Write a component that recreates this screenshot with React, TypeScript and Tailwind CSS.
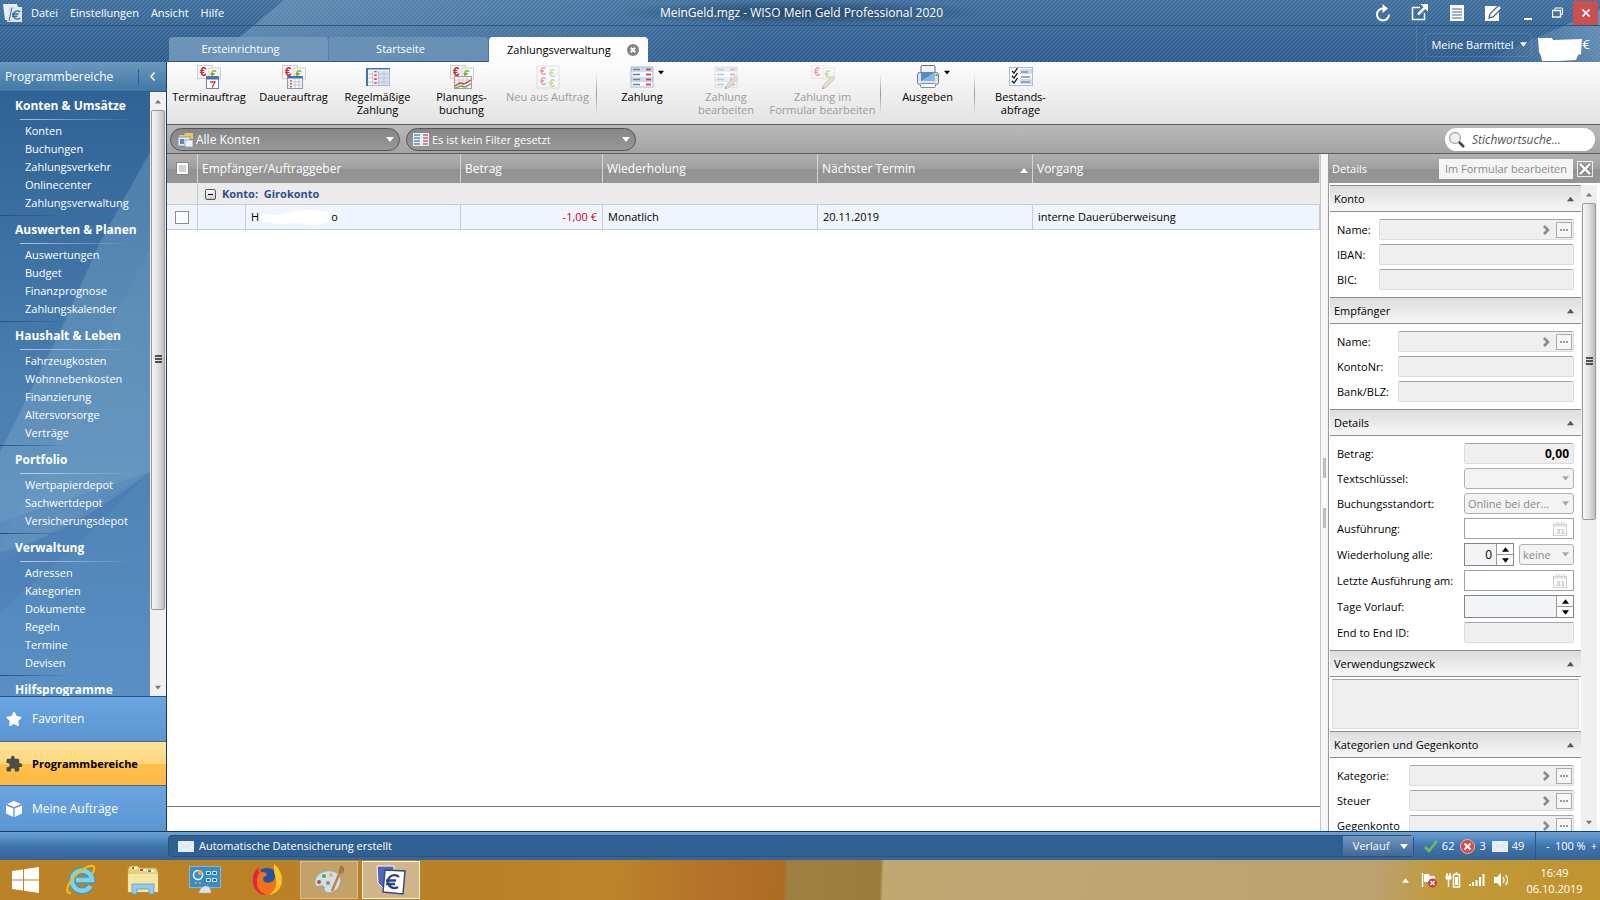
import type { ReactNode } from 'react';
import { FaStar } from 'react-icons/fa';
import { MdExtension } from 'react-icons/md';

const navSections = [
    { title: 'Konten & Umsätze', items: ['Konten', 'Buchungen', 'Zahlungsverkehr', 'Onlinecenter', 'Zahlungsverwaltung'] },
    { title: 'Auswerten & Planen', items: ['Auswertungen', 'Budget', 'Finanzprognose', 'Zahlungskalender'] },
    { title: 'Haushalt & Leben', items: ['Fahrzeugkosten', 'Wohnnebenkosten', 'Finanzierung', 'Altersvorsorge', 'Verträge'] },
    { title: 'Portfolio', items: ['Wertpapierdepot', 'Sachwertdepot', 'Versicherungsdepot'] },
    { title: 'Verwaltung', items: ['Adressen', 'Kategorien', 'Dokumente', 'Regeln', 'Termine', 'Devisen'] },
    { title: 'Hilfsprogramme', items: [] },
];

/* ---------- small icons ---------- */

function Triangle({ up = false, className = '' }: { up?: boolean; className?: string }) {
    return (
        <svg viewBox="0 0 8 5" className={`w-2 h-[5px] shrink-0 ${className}`} fill="currentColor">
            {up ? <path d="M4 0 8 5H0z" /> : <path d="M0 0h8L4 5z" />}
        </svg>
    );
}

function Mail() {
    return (
        <svg viewBox="0 0 16 11" className="w-4 h-[11px] shrink-0">
            <rect width="16" height="11" fill="#e6eef7" />
            <path d="M0 0l8 6 8-6M0 11l6-6M16 11l-6-6" fill="none" stroke="#d6e1ee" strokeWidth="1" />
        </svg>
    );
}

function EuroNotes() {
    return (
        <g fontFamily="Liberation Sans, sans-serif" fontWeight="bold">
            <rect x="0.500" y="0.500" width="15" height="13" fill="#fbf7f7" stroke="#c4c4c4" strokeWidth=".8" />
            <text x="3" y="10.500" fontSize="12" fill="#c9283c">€</text>
            <rect x="12" y="3" width="11.500" height="11" fill="#f7faf4" stroke="#c4c4c4" strokeWidth=".8" />
            <text x="13.500" y="12.500" fontSize="11" fill="#7cae2b">€</text>
        </g>
    );
}

function Pencil() {
    return (
        <g>
            <path d="M21.500 11l2.500 2.500-9 9-4 1.500 1.500-4z" fill="#d6b981" stroke="#73695a" strokeWidth=".8" />
            <path d="M11 24l.7-2.200 1.500 1.500z" fill="#333" />
        </g>
    );
}

function ListRows() {
    return (
        <g>
            {[3, 8, 13, 18].map((y, i) => (
                <g key={y}>
                    <rect x="1" y={y - 1} width="22" height="5" fill={i % 2 ? '#fafcff' : '#c8dbf1'} />
                    <path d={`M3 ${y + 1.5}h7`} stroke="#75818f" strokeWidth="1.500" />
                    <path d={`M16 ${y + 1.5}h5`} stroke="#d2404f" strokeWidth="1.800" />
                </g>
            ))}
            <rect x="1" y="2" width="22" height="20" fill="none" stroke="#9ab0c8" strokeWidth=".8" />
        </g>
    );
}

const toolIcons: Record<string, ReactNode> = {
    termin: (
        <>
            <EuroNotes />
            <rect x="9.500" y="11.500" width="12" height="12" fill="#fff" stroke="#6d87a6" />
            <rect x="9.500" y="11.500" width="12" height="3" fill="#3c74b8" />
            <path d="M13 17h5l-3 5.500" fill="none" stroke="#d33" strokeWidth="1.300" />
        </>
    ),
    dauer: (
        <>
            <EuroNotes />
            <rect x="5.500" y="11.500" width="15" height="12" fill="#f8f8f8" stroke="#8a9bb0" />
            <rect x="5.500" y="11" width="15" height="2.500" fill="#3c74b8" />
            <path d="M6 17h14M6 20h14M13 14v9M17 14v9" stroke="#b7bec7" strokeWidth=".8" />
            <path d="M9 15v8" stroke="#d33" strokeWidth="1.500" strokeDasharray="1.500 1.500" />
        </>
    ),
    regel: (
        <>
            <rect x="0.500" y="3.500" width="23" height="17" fill="#f6f6f6" stroke="#b5bcc6" />
            <rect x="0" y="3" width="24" height="1.500" fill="#3c74b8" />
            <rect x="0" y="3" width="2" height="18" fill="#3c74b8" />
            <rect x="12" y="6" width="11" height="14" fill="#d7e2ee" />
            <path d="M2 9h21M2 13h21M2 17h21M6.500 6v14M12.500 6v14M18 6v14" stroke="#b3bfce" strokeWidth=".8" />
            <path d="M9.500 6v14" stroke="#d33" strokeWidth="2.500" strokeDasharray="1.300 2.500" />
        </>
    ),
    planung: (
        <>
            <EuroNotes />
            <rect x="4.500" y="11.500" width="17" height="12" fill="#f3f3f3" stroke="#a0a0a0" />
            <path d="M5 15h16M5 18h16M9 12v11M13 12v11M17 12v11" stroke="#c6c6c6" strokeWidth=".8" />
            <path d="M5 21l5-3 4 1 7-4" fill="none" stroke="#cf3b46" strokeWidth="1.300" />
            <path d="M5 23l6-2 4 1 6-3" fill="none" stroke="#6ea43a" strokeWidth="1.300" />
        </>
    ),
    neu: (
        <g fontFamily="Liberation Sans, sans-serif" fontWeight="bold" fontSize="11">
            <rect x="1" y="1" width="22" height="22" fill="#fbf8f8" stroke="#aaa" strokeWidth=".8" />
            <text x="4" y="10" fill="#c9283c">€</text>
            <text x="13" y="12" fill="#7cae2b">€</text>
            <text x="4" y="20" fill="#c9283c">€</text>
            <text x="13" y="22" fill="#7cae2b">€</text>
        </g>
    ),
    liste: <ListRows />,
    listeEdit: (
        <>
            <ListRows />
            <Pencil />
        </>
    ),
    formEdit: (
        <>
            <EuroNotes />
            <Pencil />
        </>
    ),
    drucker: (
        <>
            <rect x="5" y="0.500" width="14" height="10" rx="1" fill="#f3f3f3" stroke="#6d6d6d" />
            <rect x="1.500" y="7.500" width="21" height="12" rx="2" fill="#dfe2e5" stroke="#747b83" />
            <rect x="5" y="7" width="14" height="9" fill="#4d8cc9" />
            <path d="M5 16l14-9v9z" fill="#86b7e2" />
            <circle cx="20.500" cy="10" r="1" fill="#4aa32a" />
            <rect x="4.500" y="18.500" width="15" height="4" rx="1" fill="#fafafa" stroke="#8a8a8a" />
        </>
    ),
    bestand: (
        <>
            <rect x="0.500" y="2.500" width="23" height="18" fill="#f6fafe" stroke="#a9bdd3" />
            <rect x="11" y="4" width="12" height="5" fill="#c8dbf1" />
            <rect x="11" y="14" width="12" height="5" fill="#c8dbf1" />
            <path d="M12 7h7M12 12h9M12 17h9" stroke="#8593a3" strokeWidth="1.500" />
            <path d="M3 6l2 2 3.500-5M3 11l2 2 3.500-5M3 16l2 2 3.500-5" fill="none" stroke="#111" strokeWidth="1.300" />
        </>
    ),
};

/* ---------- header ---------- */

function AppLogo() {
    return (
        <svg viewBox="0 0 20 20" className="w-5 h-5 shrink-0">
            <path d="M0 1h14l1 3H7L5 17H2z" fill="#e6eef6" />
            <path d="M7 4h12v15H4z" fill="#dce7f2" />
            <path d="M9 4.500L6 18" stroke="#3a6899" strokeWidth="1" />
            <path d="M17 9a4 4 0 1 0 0 6M9 11h6.500M9 13.200h5.500" fill="none" stroke="#3a6899" strokeWidth="1.500" />
        </svg>
    );
}

function Header() {
    return (
        <header className="relative shrink-0 bg-gradient-to-b from-[#42719f] to-[#2d5b8c] text-white">
            <svg className="absolute inset-0 w-full h-full" viewBox="0 0 1600 62" preserveAspectRatio="none">
                <defs>
                    <pattern id="hatch" width="4" height="4" patternUnits="userSpaceOnUse">
                        <path d="M-1 1l2-2M0 4l4-4M3 5l2-2" stroke="#8fb0cf" strokeOpacity=".3" strokeWidth="1" />
                    </pattern>
                    <linearGradient id="shine">
                        <stop offset="0" stopColor="#8fb4d2" stopOpacity=".45" />
                        <stop offset="1" stopColor="#8fb4d2" stopOpacity="0" />
                    </linearGradient>
                    <linearGradient id="corner">
                        <stop offset="0" stopColor="#8fb4d2" stopOpacity="0" />
                        <stop offset="1" stopColor="#8fb4d2" stopOpacity=".5" />
                    </linearGradient>
                </defs>
                <rect width="1600" height="62" fill="url(#hatch)" />
                <path d="M284 0H760V62H210z" fill="url(#shine)" />
                <path d="M1480 62L1600 10V62z" fill="url(#corner)" />
            </svg>
            <div className="relative flex items-center h-[26px] border-b border-[#2c5580]">
                <div className="flex-1 basis-0 flex items-center pl-[3px]">
                    <AppLogo />
                    <nav className="flex gap-3 pl-2 pt-px">
                        <button>Datei</button>
                        <button>Einstellungen</button>
                        <button>Ansicht</button>
                        <button>Hilfe</button>
                    </nav>
                </div>
                <h1 className="px-12 pt-px leading-6 text-xs bg-[radial-gradient(closest-side,rgba(20,40,65,0.6),transparent)]">
                    MeinGeld.mgz - WISO Mein Geld Professional 2020
                </h1>
                <div className="flex-1 basis-0 flex items-center justify-end">
                    <button aria-label="Aktualisieren" className="w-[37px] flex justify-center">
                        <svg viewBox="0 0 16 18" className="w-4 h-[18px]" fill="none" stroke="#fff" strokeWidth="2">
                            <path d="M9.500 4.500H8a6 6 0 1 0 6 6" />
                            <path d="M7.500 0v9L13 4.500z" fill="#fff" stroke="none" />
                        </svg>
                    </button>
                    <button aria-label="Extern öffnen" className="w-[37px] flex justify-center">
                        <svg viewBox="0 0 17 17" className="w-[17px] h-[17px]" fill="none" stroke="#fff">
                            <path d="M9 3.500H1.500v12h12V9" strokeWidth="1.500" />
                            <path d="M7 10.500l7-7" strokeWidth="2.500" />
                            <path d="M9.500 0H17v7.500z" fill="#fff" stroke="none" />
                        </svg>
                    </button>
                    <button aria-label="Liste" className="w-[37px] flex justify-center">
                        <svg viewBox="0 0 14 16" className="w-3.5 h-4">
                            <rect width="14" height="16" fill="#fff" />
                            <path d="M2 4h10M2 7h10M2 10h10M2 13h10" stroke="#3a6899" strokeWidth="1" />
                        </svg>
                    </button>
                    <button aria-label="Bearbeiten" className="w-[37px] flex justify-center">
                        <svg viewBox="0 0 17 16" className="w-[17px] h-4">
                            <path d="M0 1h14v15H0z" fill="#fff" />
                            <path d="M14 0l3 3-9 9-4 1 1-4z" fill="#fff" stroke="#3a6899" strokeWidth="1.300" />
                        </svg>
                    </button>
                    <button aria-label="Minimieren" className="w-8 h-5 flex items-end justify-center pb-[3px]">
                        <span className="w-2 h-[2px] bg-white" />
                    </button>
                    <button aria-label="Wiederherstellen" className="w-[27px] flex justify-center">
                        <svg viewBox="0 0 11 11" className="w-[11px] h-[11px]" fill="none" stroke="#fff">
                            <path d="M3 3V1h7.500v6.500H8.500" />
                            <rect x="0.500" y="3.500" width="8" height="6.500" strokeWidth="1.400" />
                        </svg>
                    </button>
                    <button aria-label="Schließen" className="w-[25px] h-6 mx-[2px] bg-[#c8504f] flex items-center justify-center">
                        <svg viewBox="0 0 8 8" className="w-2 h-2" stroke="#fff" strokeWidth="1.600">
                            <path d="M.5.5l7 7M7.500.5l-7 7" />
                        </svg>
                    </button>
                </div>
            </div>
            <div className="relative flex items-end h-9 pl-[169px]">
                <button className="w-[159px] h-[25px] mr-px rounded-t bg-[#7399bb]/90 border-b border-[#2c5580]">
                    <span className="pr-4">Ersteinrichtung</span>
                </button>
                <button className="w-[159px] h-[25px] mr-px rounded-t bg-[#6c93b7]/90 border-b border-[#2c5580]">
                    <span className="pr-4">Startseite</span>
                </button>
                <div className="w-[159px] h-[25px] rounded-t bg-[#fdfdfd] text-black flex items-center justify-between pl-[18px] pr-[9px]">
                    <button>Zahlungsverwaltung</button>
                    <button aria-label="Tab schließen">
                        <svg viewBox="0 0 12 12" className="w-3 h-3">
                            <circle cx="6" cy="6" r="6" fill="#848484" />
                            <path d="M3.800 3.800l4.400 4.400M8.200 3.800l-4.400 4.400" stroke="#fff" strokeWidth="2" />
                        </svg>
                    </button>
                </div>
                <div className="ml-auto h-full flex items-center border-l border-white/10 pl-2 pr-[10px]">
                    <button className="flex items-center gap-[6px] border border-white/10 rounded pl-[5px] pr-1 h-6 mt-px">
                        Meine Barmittel <Triangle className="w-[7px]" />
                    </button>
                    <svg viewBox="0 0 45 24" className="w-[45px] h-6 ml-[6px] mt-[11px]">
                        <path d="M0 0h14l1 2 29-1-1 15-3 1-2 5-18 1H4l-1-5-2-4z" fill="#fff" />
                    </svg>
                    <span className="text-[13px]">€</span>
                </div>
            </div>
        </header>
    );
}

/* ---------- left navigation ---------- */

function ScrollBar({ size }: { size: string }) {
    return (
        <div className="w-4 shrink-0 bg-[#f0f0f0] flex flex-col items-center">
            <div className="h-[18px] flex items-center">
                <Triangle up className="w-[6px] h-1 text-[#777]" />
            </div>
            <div className="flex-1 w-full px-px">
                <div className={`${size} border border-[#999] rounded-xs bg-gradient-to-r from-[#f6f6f6] via-[#e2e2e2] to-[#bdbdbd] flex items-center justify-center`}>
                    <svg viewBox="0 0 7 9" className="w-[7px] h-[9px]">
                        <path d="M0 1h7M0 4h7M0 7h7" stroke="#222" strokeWidth="1.400" />
                    </svg>
                </div>
            </div>
            <div className="h-[18px] flex items-center">
                <Triangle className="w-[6px] h-1 text-[#777]" />
            </div>
        </div>
    );
}

function Sidebar() {
    return (
        <aside className="w-[167px] shrink-0 flex flex-col border-r border-[#173b60] text-white">
            <div className="h-[30px] shrink-0 flex items-center bg-gradient-to-b from-[#6b97bd] to-[#4179a8] border-b border-[#2d5b88] pl-[5px]">
                <span className="flex-1 text-xs">Programmbereiche</span>
                <button aria-label="Einklappen" className="w-7 h-4 border-l border-[#2f5f8e] flex items-center justify-center">
                    <svg viewBox="0 0 5 9" className="w-[5px] h-[9px]" fill="none" stroke="#fff" strokeWidth="1.500">
                        <path d="M4.500.5L1 4.500l3.500 4" />
                    </svg>
                </button>
            </div>
            <div className="flex-1 min-h-0 flex bg-gradient-to-b from-[#2f6396] via-[#4a7fb0] to-[#5a8fc4]">
                <div className="relative flex-1 overflow-hidden">
                    <svg className="absolute inset-0 w-full h-full" viewBox="0 0 150 604" preserveAspectRatio="none">
                        <path d="M150 60L100 150 60 240 0 360V460C50 450 110 410 150 380z" fill="#9cc3dc" opacity=".25" />
                        <path d="M150 155L60 335 0 455V470L150 380z" fill="#9cc3dc" opacity=".08" />
                        <path d="M150 380L80 450 0 520V430z" fill="#3a70a8" opacity=".2" />
                    </svg>
                    <nav className="relative">
                        {navSections.map((section) => (
                            <section key={section.title} className="pb-px">
                                <h2 className="h-[27px] leading-[28px] pl-[15px] text-xs font-bold">{section.title}</h2>
                                <div className="h-px ml-5 mr-4 mb-[2px] bg-gradient-to-r from-white/60 to-transparent" />
                                {section.items.map((item) => (
                                    <a key={item} href="#" className="block h-[18px] leading-[18px] pl-[25px]">
                                        {item}
                                    </a>
                                ))}
                                <div className="h-px -mb-px mt-[3px] w-[70px] bg-gradient-to-r from-[#25507c] to-transparent" />
                            </section>
                        ))}
                    </nav>
                </div>
                <ScrollBar size="h-[88%]" />
            </div>
            <button className="h-[45px] shrink-0 flex items-center border-t border-[#27547f] bg-gradient-to-b from-[#6aa5e2] to-[#5b95d2] text-xs">
                <FaStar className="w-4 h-4 ml-[6px] mr-[10px]" />
                Favoriten
            </button>
            <button className="h-[45px] shrink-0 flex items-center border-y border-[#4f6a7d] bg-[linear-gradient(#fee29a,#fed77d_50%,#fec04d_51%,#fdb940)] text-black font-bold">
                <MdExtension className="w-[18px] h-[18px] ml-[5px] mr-[9px] text-[#4c4c48]" />
                Programmbereiche
            </button>
            <button className="h-[45px] shrink-0 flex items-center bg-gradient-to-b from-[#6aa5e2] to-[#5b95d2] text-xs">
                <svg viewBox="0 0 16 16" className="w-4 h-4 ml-[6px] mr-[10px]" fill="#fff">
                    <path d="M8 0l7 3-7 3-7-3zM0 4.500l7.300 3V16L0 12.500zM16 4.500l-7.300 3V16L16 12.500z" />
                </svg>
                Meine Aufträge
            </button>
        </aside>
    );
}

/* ---------- toolbar and filters ---------- */

function Tool({ icon, label, width, disabled = false, menu = false }: { icon: string; label: ReactNode; width: string; disabled?: boolean; menu?: boolean }) {
    return (
        <button
            disabled={disabled}
            className={`${width} relative shrink-0 flex flex-col items-center pt-[3px] leading-[13px] ${disabled ? 'text-[#9c9c9c]' : 'text-black'}`}
        >
            <svg viewBox="0 0 24 24" className={`w-6 h-6 mb-px ${disabled ? 'opacity-40' : ''}`}>
                {toolIcons[icon]}
            </svg>
            <span className="whitespace-nowrap">{label}</span>
            {menu && <Triangle className="absolute left-1/2 top-2 ml-4 w-[6px]" />}
        </button>
    );
}

function Divider() {
    return <div className="w-px mx-[5px] h-10 mt-3 shrink-0 bg-gradient-to-b from-transparent via-[#999] to-transparent" />;
}

function Toolbar() {
    return (
        <div className="flex h-[62px] shrink-0 bg-gradient-to-b from-[#fdfdfd] to-[#e3e3e3]">
            <Tool width="w-[84px]" icon="termin" label="Terminauftrag" />
            <Tool width="w-[85px]" icon="dauer" label="Dauerauftrag" />
            <Tool width="w-[83px]" icon="regel" label={<>Regelmäßige<br />Zahlung</>} />
            <Tool width="w-[85px]" icon="planung" label={<>Planungs-<br />buchung</>} />
            <Tool width="w-[87px]" icon="neu" label="Neu aus Auftrag" disabled />
            <Divider />
            <Tool width="w-[80px]" icon="liste" label="Zahlung" menu />
            <Tool width="w-[88px]" icon="listeEdit" label={<>Zahlung<br />bearbeiten</>} disabled />
            <Tool width="w-[105px]" icon="formEdit" label={<>Zahlung im<br />Formular bearbeiten</>} disabled />
            <Divider />
            <Tool width="w-[83px]" icon="drucker" label="Ausgeben" menu />
            <Divider />
            <Tool width="w-[81px]" icon="bestand" label={<>Bestands-<br />abfrage</>} />
        </div>
    );
}

function FilterBar() {
    return (
        <div className="flex h-[30px] shrink-0 items-center gap-[6px] px-[3px] pt-px border-y border-[#5f5f5f] bg-gradient-to-b from-[#b9b9b9] to-[#a3a3a3]">
            <label className="w-[230px] h-[23px] flex items-center rounded-full border border-[#555] bg-gradient-to-b from-[#858585] to-[#989898] pl-[7px] pr-[5px] text-white">
                <svg viewBox="0 0 16 14" className="w-4 h-3.5 shrink-0 mr-[2px]">
                    <path d="M1 2h5l1-2h8v6H1z" fill="#f0c357" />
                    <rect x="0" y="4" width="12" height="9" fill="#dfe9f5" stroke="#6c8fb5" strokeWidth=".7" />
                    <rect x="2" y="6" width="4" height="5" fill="#5b89bd" />
                    <rect x="7" y="7" width="8" height="7" fill="#f2f2f2" stroke="#8592a3" strokeWidth=".7" />
                </svg>
                <select aria-label="Konten" className="flex-1 text-xs appearance-none outline-none bg-transparent">
                    <option>Alle Konten</option>
                </select>
                <Triangle />
            </label>
            <label className="w-[230px] h-[23px] flex items-center rounded-full border border-[#555] bg-gradient-to-b from-[#858585] to-[#989898] pl-[6px] pr-[5px] text-white">
                <svg viewBox="0 0 16 13" className="w-4 h-[13px] shrink-0 mr-[3px]">
                    <rect width="16" height="13" fill="#e7eef7" />
                    <path d="M1 2h6M1 5h6M1 8h6M1 11h6" stroke="#5e8cc0" strokeWidth="1.500" />
                    <path d="M10 2h5M10 5h5M10 8h5M10 11h5" stroke="#d36570" strokeWidth="1.500" />
                </svg>
                <select aria-label="Filter" className="flex-1 appearance-none outline-none bg-transparent">
                    <option>Es ist kein Filter gesetzt</option>
                </select>
                <Triangle />
            </label>
            <label className="ml-auto mr-[2px] w-[150px] h-[23px] flex items-center rounded-full bg-white pl-[3px]">
                <svg viewBox="0 0 17 17" className="w-[17px] h-[17px] shrink-0">
                    <circle cx="7" cy="7" r="5.500" fill="#eef0f2" stroke="#a9a9a9" strokeWidth="1.300" />
                    <path d="M11 11l5 5" stroke="#444" strokeWidth="2.500" />
                </svg>
                <input aria-label="Stichwortsuche" placeholder="Stichwortsuche..." className="w-full pl-[7px] text-xs italic outline-none placeholder:text-[#555]" />
            </label>
        </div>
    );
}

/* ---------- payments table ---------- */

function PaymentsTable() {
    return (
        <main className="flex-1 min-w-0 flex flex-col bg-white">
            <div className="flex-1 min-h-0 border-b border-[#777]">
                <table className="w-full table-fixed border-separate border-spacing-0 text-black">
                    <colgroup>
                        <col className="w-[31px]" />
                        <col className="w-12" />
                        <col className="w-[215px]" />
                        <col className="w-[142px]" />
                        <col className="w-[215px]" />
                        <col className="w-[215px]" />
                        <col />
                    </colgroup>
                    <thead>
                        <tr className="h-[29px] text-left text-xs text-white bg-[linear-gradient(#b0b0b0,#9f9f9f_50%,#929292_51%,#969696)] [&>th]:font-normal [&>th]:border-r [&>th]:border-[#d5d5d5] [&>th]:px-1">
                            <th>
                                <input type="checkbox" aria-label="Alle auswählen" className="appearance-none block mx-auto w-[11px] h-[11px] border-2 border-white bg-[#d2d2d2] outline outline-[#888]" />
                            </th>
                            <th colSpan={2}>Empfänger/Auftraggeber</th>
                            <th>Betrag</th>
                            <th>Wiederholung</th>
                            <th>
                                <span className="flex items-center justify-between">
                                    Nächster Termin <Triangle up className="mt-1" />
                                </span>
                            </th>
                            <th>Vorgang</th>
                        </tr>
                    </thead>
                    <tbody>
                        <tr className="h-[22px] bg-[#ebebeb] [&>td]:border-b [&>td]:border-[#c6cbdc]">
                            <td className="border-r" />
                            <td colSpan={6}>
                                <div className="flex items-center pt-px">
                                    <button aria-label="Gruppe einklappen" className="ml-[7px] mr-[6px] w-[11px] h-[11px] rounded-[2px] border border-[#555] bg-gradient-to-b from-white to-[#ccc] flex items-center justify-center">
                                        <span className="w-[5px] h-px bg-black" />
                                    </button>
                                    <span className="font-bold text-[#2b4f8f] whitespace-pre">Konto:  Girokonto</span>
                                </div>
                            </td>
                        </tr>
                        <tr className="h-[25px] bg-[#f0f5fd] [&>td]:border-b [&>td]:border-r [&>td]:border-[#c6cbdc] [&>td]:px-[5px]">
                            <td>
                                <input type="checkbox" aria-label="Zahlung auswählen" className="appearance-none block mx-auto w-3.5 h-[13px] border border-[#8c8c8c] bg-white" />
                            </td>
                            <td />
                            <td>
                                <span className="flex items-center">
                                    H
                                    <svg viewBox="0 0 70 18" className="w-[70px] h-[18px] mx-px">
                                        <path d="M0 6l20 1 14-4 18-1 17 2v10l-14 3-20-2-16 1-19-3z" fill="#fff" />
                                    </svg>
                                    o
                                </span>
                            </td>
                            <td className="text-right text-[#d0021b]">-1,00 €</td>
                            <td>Monatlich</td>
                            <td>20.11.2019</td>
                            <td>interne Dauerüberweisung</td>
                        </tr>
                    </tbody>
                </table>
            </div>
            <div className="h-6 shrink-0" />
        </main>
    );
}

/* ---------- details panel ---------- */

function Section({ title, children }: { title: string; children: ReactNode }) {
    return (
        <section className="border-t border-[#8d8d8d]">
            <h3>
                <button className="w-full h-[26px] flex items-center justify-between pl-1 pr-[7px] border-b border-[#8d8d8d] bg-gradient-to-b from-[#dcdcdc] to-[#f7f7f7]">
                    {title}
                    <Triangle up className="w-[7px] h-[6px] text-[#555]" />
                </button>
            </h3>
            {children}
        </section>
    );
}

function Rows({ children }: { children: ReactNode }) {
    return <div className="flex flex-col gap-1 py-[7px] px-[7px]">{children}</div>;
}

function Field({ id, label, labelWidth, picker = false, value }: { id: string; label: string; labelWidth: string; picker?: boolean; value?: string }) {
    return (
        <div className="flex h-[21px] items-center">
            <label htmlFor={id} className={`${labelWidth} shrink-0 whitespace-nowrap`}>{label}</label>
            <div className="flex-1 min-w-0 h-full flex items-center bg-[#efefef] border border-[#dcdcdc] border-t-[#a5a5a5] rounded-[2px]">
                <input id={id} defaultValue={value} readOnly className="flex-1 min-w-0 px-1 text-xs text-right font-bold outline-none" />
                {picker && (
                    <>
                        <svg viewBox="0 0 8 10" className="w-2 h-[10px] mr-[5px]" fill="none" stroke="#888" strokeWidth="2.500">
                            <path d="M1 1l4 4-4 4" />
                        </svg>
                        <button aria-label={`${label} auswählen`} className="w-4 h-4 mr-px border border-[#aaa] bg-[#f6f6f6] flex items-center justify-center gap-px">
                            <span className="w-[2px] h-[2px] bg-[#999]" />
                            <span className="w-[2px] h-[2px] bg-[#999]" />
                            <span className="w-[2px] h-[2px] bg-[#999]" />
                        </button>
                    </>
                )}
            </div>
        </div>
    );
}

function Choice({ id, value, className = '' }: { id: string; value: string; className?: string }) {
    return (
        <div className={`flex-1 min-w-0 h-[21px] flex items-center border border-[#b0b0b0] rounded-[3px] bg-[#f3f3f3] text-[#8a8a8a] pl-[3px] pr-1 ${className}`}>
            <select id={id} aria-label={value || undefined} className="flex-1 min-w-0 appearance-none outline-none">
                <option>{value}</option>
            </select>
            <Triangle className="w-[7px] h-1 text-[#aaa]" />
        </div>
    );
}

function DateBox({ id }: { id: string }) {
    return (
        <div className="flex-1 min-w-0 h-[21px] flex items-center border border-[#9da3a8] bg-white pr-[6px]">
            <input id={id} className="flex-1 min-w-0 px-1 outline-none" />
            <svg viewBox="0 0 14 14" className="w-3.5 h-3.5" fill="none" stroke="#cfcfcf">
                <rect x="0.500" y="2.500" width="13" height="11" />
                <path d="M1 4h12M3.500 0v3M6 0v3M8.500 0v3M11 0v3" />
                <text x="3" y="12" fontSize="8" fontWeight="bold" fontFamily="Liberation Sans, sans-serif" fill="#c4c4c4" stroke="none">31</text>
            </svg>
        </div>
    );
}

function Spinner({ id, value, className }: { id: string; value: string; className: string }) {
    return (
        <div className={`h-[23px] flex border border-[#7f8890] bg-[#f2f4f5] ${className}`}>
            <input id={id} defaultValue={value} className="flex-1 min-w-0 px-1 text-xs text-right outline-none" />
            <div className="w-[17px] flex flex-col">
                <button aria-label="Erhöhen" className="flex-1 border-l border-b border-[#999] bg-white flex items-center justify-center">
                    <Triangle up className="w-[7px] h-1" />
                </button>
                <button aria-label="Verringern" className="flex-1 border-l border-[#999] bg-white flex items-center justify-center">
                    <Triangle className="w-[7px] h-1" />
                </button>
            </div>
        </div>
    );
}

function Row({ id, label, children }: { id: string; label: string; children: ReactNode }) {
    return (
        <div className="flex items-center">
            <label htmlFor={id} className="w-[127px] shrink-0 whitespace-nowrap">{label}</label>
            {children}
        </div>
    );
}

function DetailsPanel() {
    return (
        <aside className="w-[272px] shrink-0 flex flex-col border-l border-[#999] bg-white text-black">
            <div className="h-[29px] shrink-0 flex items-center pl-[3px] pr-2 bg-[linear-gradient(#b0b0b0,#9f9f9f_50%,#929292_51%,#969696)]">
                <h2 className="flex-1 text-white">Details</h2>
                <button disabled className="h-5 px-[6px] mr-[5px] bg-[#f4f4f4] text-[#8a8a8a]">Im Formular bearbeiten</button>
                <button aria-label="Details schließen" className="w-[14px] h-[14px] outline outline-white/80">
                    <svg viewBox="0 0 14 14" className="w-3.5 h-3.5">
                        <path d="M2 2l10 10M12 2L2 12" stroke="#666" strokeWidth="4.500" />
                        <path d="M2 2l10 10M12 2L2 12" stroke="#fff" strokeWidth="2.800" />
                    </svg>
                </button>
            </div>
            <div className="flex-1 min-h-0 flex pl-px pr-[3px] pt-[2px]">
                <div className="flex-1 min-w-0 overflow-hidden">
                    <Section title="Konto">
                        <Rows>
                            <Field id="k-name" label="Name:" labelWidth="w-[42px]" picker />
                            <Field id="k-iban" label="IBAN:" labelWidth="w-[42px]" />
                            <Field id="k-bic" label="BIC:" labelWidth="w-[42px]" />
                        </Rows>
                    </Section>
                    <Section title="Empfänger">
                        <Rows>
                            <Field id="e-name" label="Name:" labelWidth="w-[61px]" picker />
                            <Field id="e-konto" label="KontoNr:" labelWidth="w-[61px]" />
                            <Field id="e-bank" label="Bank/BLZ:" labelWidth="w-[61px]" />
                        </Rows>
                    </Section>
                    <Section title="Details">
                        <Rows>
                            <Field id="betrag" label="Betrag:" labelWidth="w-[127px]" value="0,00" />
                            <Row id="ts" label="Textschlüssel:">
                                <Choice id="ts" value="" />
                            </Row>
                            <Row id="bs" label="Buchungsstandort:">
                                <Choice id="bs" value="Online bei der..." />
                            </Row>
                            <Row id="af" label="Ausführung:">
                                <DateBox id="af" />
                            </Row>
                            <Row id="wa" label="Wiederholung alle:">
                                <Spinner id="wa" value="0" className="w-[50px] shrink-0 mr-[5px]" />
                                <Choice id="wa-unit" value="keine" />
                            </Row>
                            <Row id="la" label="Letzte Ausführung am:">
                                <DateBox id="la" />
                            </Row>
                            <Row id="tv" label="Tage Vorlauf:">
                                <Spinner id="tv" value="" className="flex-1 min-w-0" />
                            </Row>
                            <Field id="e2e" label="End to End ID:" labelWidth="w-[127px]" />
                        </Rows>
                    </Section>
                    <Section title="Verwendungszweck">
                        <div className="p-[2px]">
                            <textarea aria-label="Verwendungszweck" className="block w-full h-[50px] resize-none bg-[#efefef] border border-[#dcdcdc] border-t-[#a5a5a5] outline-none" />
                        </div>
                    </Section>
                    <Section title="Kategorien und Gegenkonto">
                        <Rows>
                            <Field id="kat" label="Kategorie:" labelWidth="w-[72px]" picker />
                            <Field id="steuer" label="Steuer" labelWidth="w-[72px]" picker />
                            <Field id="gk" label="Gegenkonto" labelWidth="w-[72px]" picker />
                        </Rows>
                    </Section>
                </div>
                <ScrollBar size="h-[52%]" />
            </div>
        </aside>
    );
}

/* ---------- status bar and taskbar ---------- */

function StatusBar() {
    return (
        <footer className="h-[29px] shrink-0 flex items-center border-t border-[#173b60] bg-gradient-to-b from-[#6ba3d6] via-[#3f74ad] to-[#356396] text-white pl-[168px]">
            <div className="flex-1 h-[22px] flex items-center bg-[#305f92] rounded border border-[#29527f]">
                <div className="pl-[9px] flex items-center gap-[5px]">
                    <Mail />
                    Automatische Datensicherung erstellt
                </div>
                <button className="ml-auto h-full w-[70px] flex items-center justify-between pl-[10px] pr-[5px] bg-gradient-to-b from-[#7396bd] to-[#41699a]">
                    Verlauf <Triangle />
                </button>
            </div>
            <div className="flex items-center gap-1 pl-[10px] pr-[11px]">
                <svg viewBox="0 0 14 13" className="w-3.5 h-[13px]" fill="none" stroke="#6cc04a" strokeWidth="2.500">
                    <path d="M1 7l4 4L13 1" />
                </svg>
                62
                <svg viewBox="0 0 15 15" className="w-[15px] h-[15px] ml-[2px]">
                    <circle cx="7.500" cy="7.500" r="7" fill="#d84a4a" stroke="#f1b5b5" />
                    <path d="M4.500 4.500l6 6M10.500 4.500l-6 6" stroke="#fff" strokeWidth="2" />
                </svg>
                3
                <span className="ml-[2px]"><Mail /></span>
                49
            </div>
            <div className="h-full border-l border-[#2c5580] flex items-center gap-[5px] pl-[10px] pr-[3px]">
                <button aria-label="Verkleinern">-</button>
                <span>100 %</span>
                <button aria-label="Vergrößern">+</button>
            </div>
        </footer>
    );
}

function Taskbar() {
    return (
        <div className="h-10 shrink-0 flex items-center text-white bg-[linear-gradient(92deg,#bb8328_0%,#b98026_30%,#bd852a_38%,#b5722a_44%,#ad6c26_49%,#9e8140_49.200%,#9c7c3c_55%,#c1a873_55.200%,#bba26f_86%,#c19a3a_90%,#c0942f_100%)]">
            <button aria-label="Start" className="w-[50px] flex justify-center">
                <svg viewBox="0 0 27 26" className="w-[27px] h-[26px]" fill="#fff">
                    <path d="M0 4l11-1.500v10H0zM12 2.300L27 0v12.500H12zM0 13.500h11v10L0 22zM12 13.500h15V26l-15-2.300z" />
                </svg>
            </button>
            <button aria-label="Internet Explorer" className="w-[62px] flex justify-center">
                <svg viewBox="0 0 32 32" className="w-8 h-8" fill="none">
                    <path d="M25.500 22a10 10 0 1 1 1.500-6H11" stroke="#2f9bd0" strokeWidth="6.500" />
                    <path d="M25.500 22a10 10 0 1 1 1.500-6H11" stroke="#7fd3f2" strokeWidth="4.500" />
                    <path d="M6 29C-1 30 2 19 12 10S31-1 29 6c-.3 1.500-1 3-2 4" stroke="#f3b91c" strokeWidth="2.200" />
                </svg>
            </button>
            <button aria-label="Explorer" className="w-[62px] flex justify-center">
                <svg viewBox="0 0 32 30" className="w-8 h-[30px]">
                    <path d="M1 4l2-3h8l2 2h16l2 4v20H1z" fill="#e9cf7a" stroke="#c8a545" strokeWidth=".7" />
                    <path d="M4 2h6v2H4zM12 4h7v2h-7zM20 5h7v2h-7z" fill="#fff" />
                    <path d="M5 2h2v2H5z" fill="#3a9a3a" />
                    <path d="M13 4h3v2h-3z" fill="#c44" />
                    <path d="M21 5h3v2h-3z" fill="#48a" />
                    <path d="M1 9h30v18H1z" fill="#f6e6a4" />
                    <path d="M5 19h22v10h-5v-5H10v5H5z" fill="#8fcbea" stroke="#5a9fc6" strokeWidth=".8" />
                </svg>
            </button>
            <button aria-label="Systemsteuerung" className="w-[62px] flex justify-center">
                <svg viewBox="0 0 32 28" className="w-8 h-7">
                    <rect x="0.500" y="0.500" width="31" height="21" fill="#3b8bc4" stroke="#7fb6dc" />
                    <circle cx="9" cy="9" r="4.500" fill="none" stroke="#e8f4fb" strokeWidth="1.500" />
                    <path d="M9 9V4a5 5 0 0 1 4.500 4z" fill="#f3a53a" />
                    <path d="M17.500 5.500h4v3h-4zM23.500 5.500h4v3h-4zM17.500 12.500h4v3h-4zM23.500 12.500h4v3h-4z" fill="#2a6b9f" stroke="#cfe6f5" />
                    <circle cx="7" cy="17" r="1" fill="#f3a53a" />
                    <circle cx="11" cy="17" r="1" fill="#f3a53a" />
                    <path d="M10 27c1-5 4-7 7-7s5 3 5 7z" fill="#dfe3e8" stroke="#aab" strokeWidth=".6" />
                </svg>
            </button>
            <button aria-label="Firefox" className="w-[62px] flex justify-center">
                <svg viewBox="0 0 32 32" className="w-8 h-8">
                    <circle cx="16" cy="17" r="13" fill="#1f55a0" />
                    <path d="M2 15C2 8 6 5 8 3c0 3 1 4 3 5 3 0 5 1 5 3-1 2-4 1-4 4 0 3 4 5 8 3 4-1 5-6 3-10 0-3-1-5 0-8 5 4 8 10 8 16 0 9-7 15-15 15S1 24 2 15z" fill="#f2711c" />
                    <path d="M23 0c5 4 8 10 8 16 0 8-6 14-13 15 6-4 8-9 7-15 0-5-3-8-2-16z" fill="#fbc52a" />
                    <path d="M2 15C1 24 7 31 16 31 9 29 5 24 6 17c0-4 1-6 3-9-3-1-1-3-1-5-2 2-6 5-6 12z" fill="#e0263c" />
                </svg>
            </button>
            <button aria-label="Paint" className="w-[58px] h-[38px] ml-[2px] border border-[#d9c092] bg-[#c3a268] flex items-center justify-center">
                <svg viewBox="0 0 32 30" className="w-8 h-[30px]">
                    <path d="M2 19C1 10 10 5 18 6s11 7 9 13-8 10-14 8c-3-1 0-5-3-6s-7 2-8-2z" fill="#cfe0e8" stroke="#8da9b5" strokeWidth=".8" />
                    <circle cx="6" cy="17" r="2" fill="#c94343" />
                    <circle cx="11" cy="11" r="2" fill="#5aa845" />
                    <circle cx="18" cy="10" r="2" fill="#e2b93b" />
                    <circle cx="15" cy="18" r="2" fill="#9c8a6a" />
                    <path d="M19 26L27 7" stroke="#c77f3c" strokeWidth="2.500" />
                    <path d="M26 8c-1-4 2-6 1-8 3 1 5 3 4 6s-3 3-5 2z" fill="#a9743f" />
                </svg>
            </button>
            <button aria-label="WISO Mein Geld" className="w-[58px] h-[38px] ml-1 border border-[#fff6df] bg-[#cfb587] flex items-center justify-center">
                <svg viewBox="0 0 32 30" className="w-8 h-[30px]">
                    <path d="M2 1h17v5L9 24 3 18z" fill="#5566b5" stroke="#fff" />
                    <path d="M10 5l20 1-2 23-20-2z" fill="#fff" stroke="#2f4d87" strokeWidth="1.500" />
                    <path d="M24 12a6.500 6.500 0 1 0-1 10M11 15.500h10M11 19h9" fill="none" stroke="#2c4680" strokeWidth="2.400" />
                </svg>
            </button>
            <div className="ml-auto flex items-center gap-2">
                <button aria-label="Ausgeblendete Symbole" className="mr-1"><Triangle up className="w-[7px]" /></button>
                <svg viewBox="0 0 16 16" className="w-4 h-4">
                    <path d="M1.500 1v14" stroke="#fff" strokeWidth="1.500" />
                    <path d="M3 2h5l1 2h5v6H3z" fill="#fff" />
                    <circle cx="11.500" cy="11" r="4.500" fill="#cf3b3b" />
                    <path d="M9.500 9l4 4M13.500 9l-4 4" stroke="#fff" strokeWidth="1.500" />
                </svg>
                <svg viewBox="0 0 16 16" className="w-4 h-4" fill="none" stroke="#fff" strokeWidth="1.500">
                    <path d="M2 1v3M5 1v3M3.500 7v8" />
                    <path d="M1 4h5v3H1z" fill="#fff" strokeWidth="1" />
                    <rect x="8.500" y="2.500" width="6" height="12.500" />
                    <path d="M10.500 1h2" />
                    <path d="M10 5h3v8h-3z" fill="#fff" stroke="none" />
                </svg>
                <svg viewBox="0 0 16 16" className="w-4 h-4" fill="#fff">
                    <path d="M0 12h2v2H0zM3 10h2v4H3zM6.500 8h2v6h-2zM10 5h2v9h-2zM13.500 2h2v12h-2z" />
                </svg>
                <svg viewBox="0 0 16 16" className="w-4 h-4">
                    <path d="M1 5h3l4-4v14l-4-4H1z" fill="#fff" />
                    <path d="M10 5c1.500 2 1.500 4 0 6M12.500 3c2.500 3 2.500 7 0 10" fill="none" stroke="#fff" strokeWidth="1.200" />
                </svg>
            </div>
            <div className="w-[91px] pt-[2px] text-center leading-4">
                16:49
                <br />
                06.10.2019
            </div>
        </div>
    );
}

export default function App() {
    return (
        <div className="h-screen flex flex-col overflow-hidden bg-white text-[11px] leading-4 font-['Open_Sans','Noto_Sans',sans-serif]">
            <Header />
            <div className="flex-1 min-h-0 flex">
                <Sidebar />
                <div className="flex-1 min-w-0 flex flex-col">
                    <Toolbar />
                    <FilterBar />
                    <div className="flex-1 min-h-0 flex">
                        <PaymentsTable />
                        <div className="w-2 shrink-0 bg-[#f5f5f5] border-l border-[#c8c8c8] flex items-center justify-center">
                            <div className="w-[3px] h-[70px] border-y-[20px] border-[#bdbdbd] bg-white" />
                        </div>
                        <DetailsPanel />
                    </div>
                </div>
            </div>
            <StatusBar />
            <Taskbar />
        </div>
    );
}
